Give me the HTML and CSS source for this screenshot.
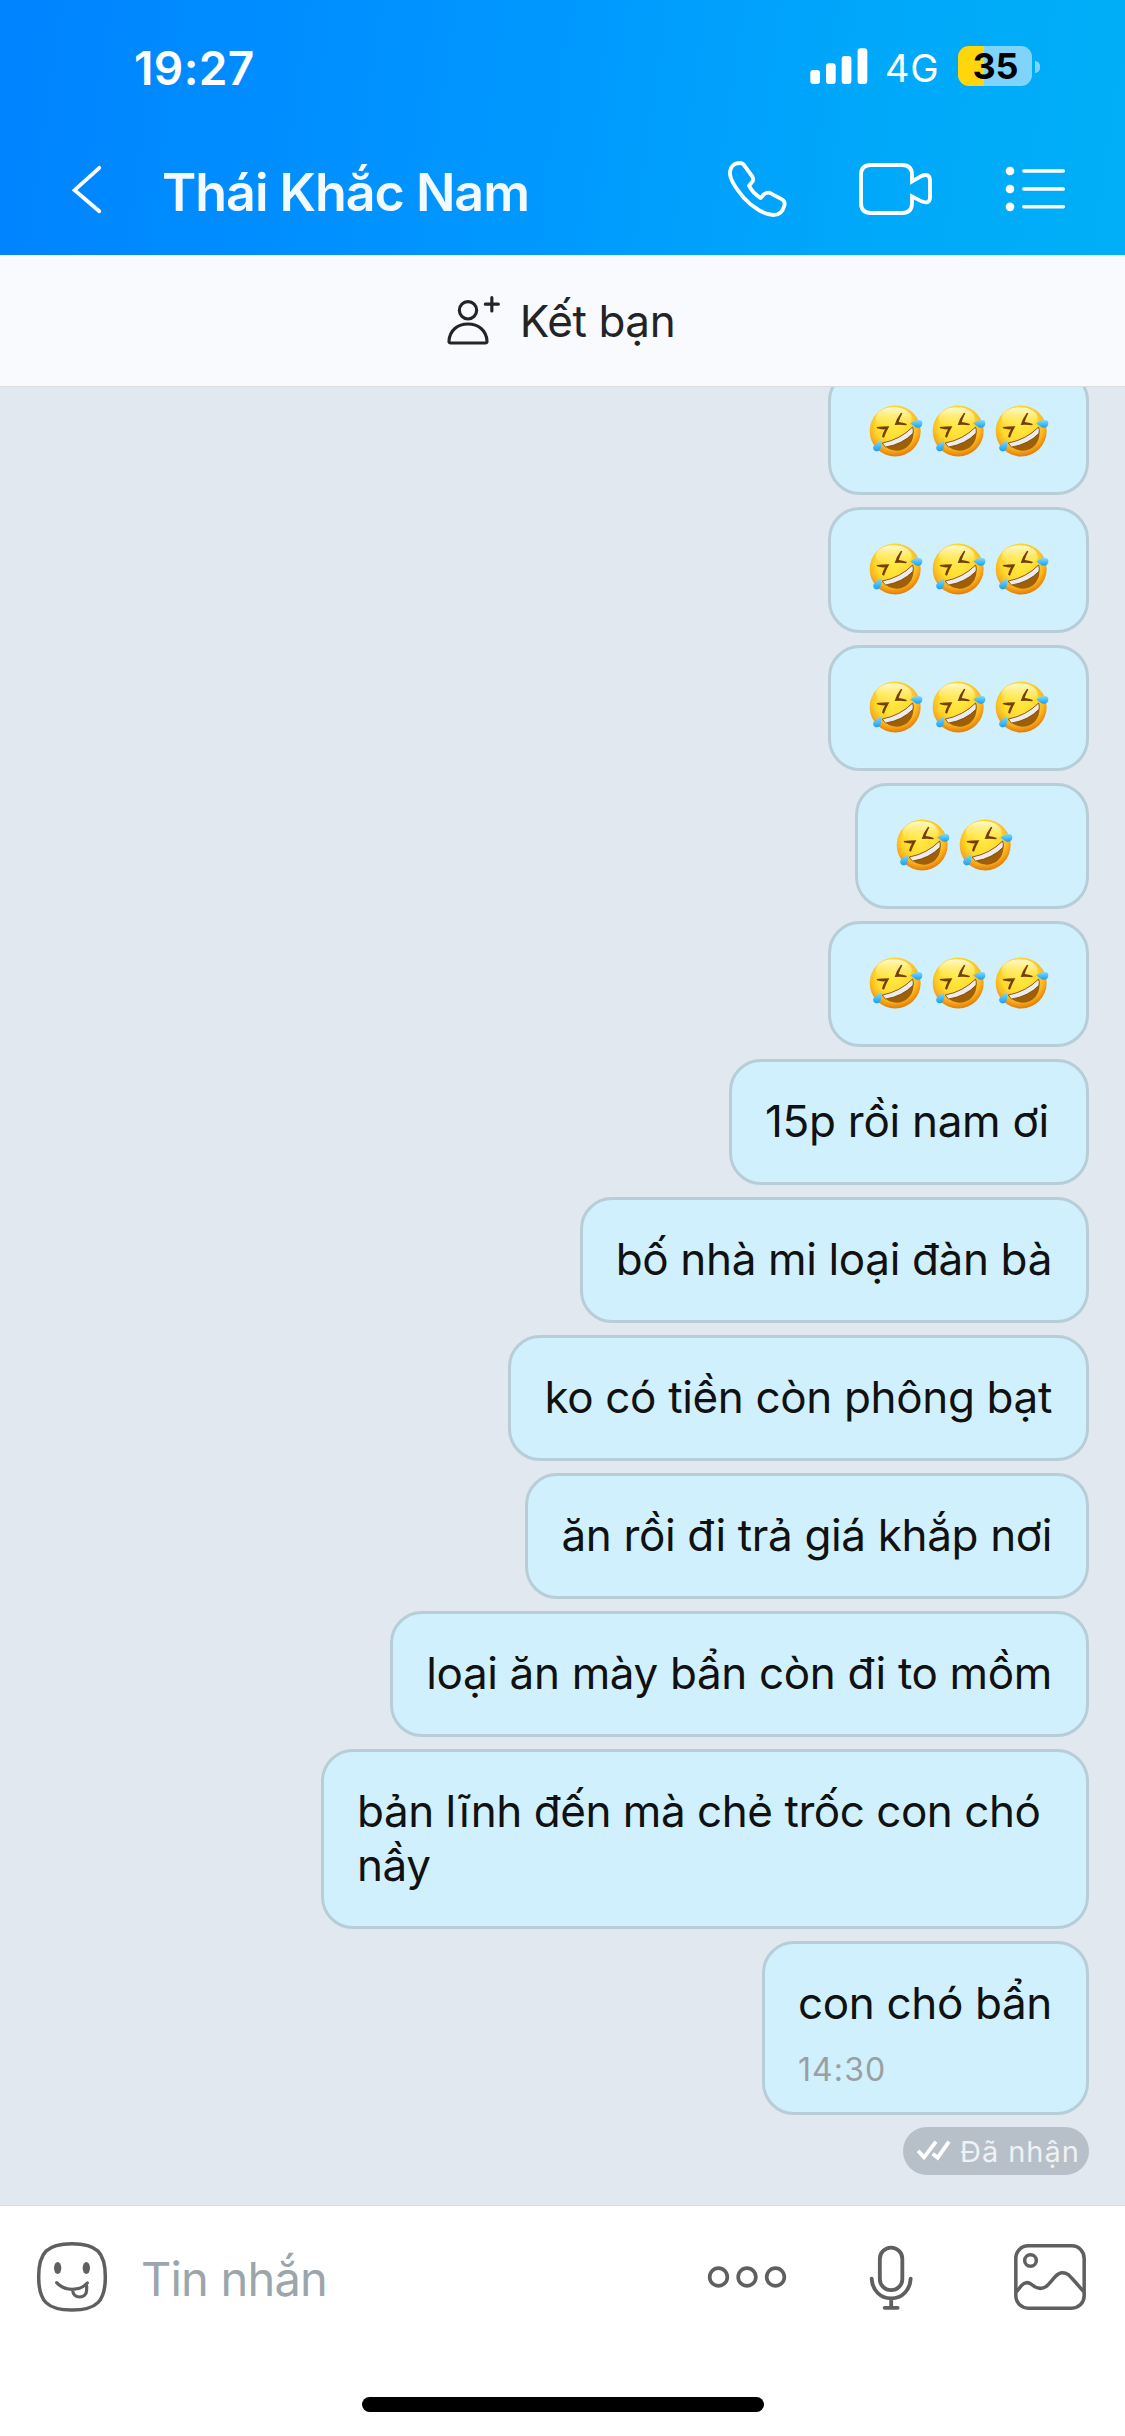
FILE: index.html
```html
<!DOCTYPE html>
<html lang="vi">
<head>
<meta charset="utf-8">
<title>Thái Khắc Nam</title>
<link rel="stylesheet" href="styles.css">
</head>
<body>
<svg class="defs" aria-hidden="true">
  <defs>
    <radialGradient id="face" cx="0.47" cy="0.38" r="0.62">
      <stop offset="0" stop-color="#ffea45"/>
      <stop offset="0.55" stop-color="#ffdb2c"/>
      <stop offset="0.78" stop-color="#fbb31f"/>
      <stop offset="1" stop-color="#e27c05"/>
    </radialGradient>
    <linearGradient id="shine" x1="0" y1="0" x2="0" y2="1">
      <stop offset="0" stop-color="#fffde0" stop-opacity="0.9"/>
      <stop offset="1" stop-color="#fff27a" stop-opacity="0"/>
    </linearGradient>
    <linearGradient id="tear" x1="0" y1="0" x2="0" y2="1">
      <stop offset="0" stop-color="#7cdcff"/>
      <stop offset="1" stop-color="#1b9ff0"/>
    </linearGradient>
    <symbol id="rofl" viewBox="0 0 189 162">
      <circle cx="93.500" cy="81" r="76.500" fill="url(#face)"/>
      <ellipse cx="89" cy="42" rx="54" ry="32" fill="url(#shine)"/>
      <path d="M38 69Q56 67 76 67Q66 84 60 101L54 98Q57 86 63 76Q50 77 39 73Z" fill="#743f05"/>
      <path d="M111 26L115 28Q108 42 104 54Q117 55 129 60L126 64Q111 61 92 63Q97 44 111 26Z" fill="#743f05"/>
      <path d="M55 117Q108 107 146 69C155 100 140 138 98 140Q70 139 55 117Z" fill="#9d6008"/>
      <path d="M55 117Q108 107 146 69Q149 79 147 88Q115 121 65 129Q59 125 55 117Z" fill="#ececef" stroke="#7a4306" stroke-width="2.500"/>
      <path d="M139 59C147 51 155 48 164 48C172 48 176 53 175 60C174 67 168 72 160 71C152 70 147 62 139 59Z" fill="url(#tear)"/>
      <path d="M51 109C53 119 52 128 49 135C46 142 38 144 32 140C26 136 26 129 31 124C37 117 45 116 51 109Z" fill="url(#tear)"/>
    </symbol>
  </defs>
</svg>

<div class="screen">
  <header class="header">
    <div class="status">
      <span class="clock">19:27</span>
      <div class="status-right">
        <svg class="signal" viewBox="810 46 58 40" fill="#fff">
          <rect x="810.3" y="70" width="9.7" height="14" rx="3"/>
          <rect x="826" y="63.3" width="9.7" height="20.7" rx="3"/>
          <rect x="841.7" y="56" width="9.7" height="28" rx="3"/>
          <rect x="857.6" y="48.3" width="9.7" height="35.7" rx="3"/>
        </svg>
        <span class="network">4G</span>
        <span class="battery">35</span>
        <span class="battery-cap"></span>
      </div>
    </div>
    <nav class="nav">
      <svg class="back" viewBox="60 135 50 114" fill="none" stroke="#fff" stroke-width="3.8" stroke-linecap="round">
        <path d="M99.3 167.8L74.6 190.2L99.3 211.3"/>
      </svg>
      <h1 class="title">Thái Khắc Nam</h1>
      <div class="actions">
        <svg class="phone" viewBox="60 405 240 342" fill="none" stroke="#fff" stroke-width="11.5" stroke-linejoin="round">
          <path d="M90 520C90 500 103 489 120 489C127 489 131 493 135 499L157 530C161 537 160 544 154 549L147 557C155 573 167 585 182 594L188 587C194 580 204 576 212 580L246 598C253 602 255 609 253 617C248 636 236 645 220 645C195 644 160 625 132 594C108 566 90 538 90 520Z"/>
        </svg>
        <svg class="video" viewBox="450 405 300 342" fill="none" stroke="#fff" stroke-width="11.5">
          <path d="M636 544V525Q636 495 606 495H513Q483 495 483 525V609Q483 639 513 639H606Q636 639 636 609V589L664 604Q690 614 690 592V542Q690 518 664 528Z"/>
        </svg>
        <svg class="list" viewBox="900 405 210 342" fill="#fff" stroke="#fff">
          <g stroke="none"><circle cx="930" cy="513" r="13"/><circle cx="930" cy="567" r="13"/><circle cx="930" cy="620.5" r="13"/></g>
          <path d="M971.5 513H1090M971.5 567H1090M971.5 620.5H1090" stroke-width="10.5" stroke-linecap="round"/>
        </svg>
      </div>
    </nav>
  </header>

  <div class="friend-bar">
    <svg class="add-friend" viewBox="132 120 180 180" fill="none" stroke="#222426" stroke-width="9.5" stroke-linecap="round" stroke-linejoin="round">
      <circle cx="204" cy="178" r="26"/>
      <path d="M147 269C150 238 172 219 204 219C236 219 258 238 261 269Q262 276 255 276H153Q146 276 147 269Z"/>
      <path d="M256 159.500H295M275.500 140V180"/>
    </svg>
    <span class="friend-label">Kết bạn</span>
  </div>

  <main class="chat">
    <div class="bubble"><div class="emojis"><svg><use href="#rofl"/></svg><svg><use href="#rofl"/></svg><svg><use href="#rofl"/></svg></div></div>
    <div class="bubble"><div class="emojis"><svg><use href="#rofl"/></svg><svg><use href="#rofl"/></svg><svg><use href="#rofl"/></svg></div></div>
    <div class="bubble"><div class="emojis"><svg><use href="#rofl"/></svg><svg><use href="#rofl"/></svg><svg><use href="#rofl"/></svg></div></div>
    <div class="bubble"><div class="emojis"><svg><use href="#rofl"/></svg><svg><use href="#rofl"/></svg></div></div>
    <div class="bubble"><div class="emojis"><svg><use href="#rofl"/></svg><svg><use href="#rofl"/></svg><svg><use href="#rofl"/></svg></div></div>
    <div class="bubble text short">15p rồi nam ơi</div>
    <div class="bubble text">bố nhà mi loại đàn bà</div>
    <div class="bubble text">ko có tiền còn phông bạt</div>
    <div class="bubble text">ăn rồi đi trả giá khắp nơi</div>
    <div class="bubble text">loại ăn mày bẩn còn đi to mồm</div>
    <div class="bubble text long">bản lĩnh đến mà chẻ trốc con chó nầy</div>
    <div class="bubble text last">con chó bẩn<time class="time">14:30</time></div>
    <div class="receipt">
      <svg class="checks" viewBox="705 90 111 66" fill="none" stroke="#fff" stroke-width="11.500">
        <path d="M714 125L732 145L768 98M758 134L773 146L807 98"/>
      </svg>
      <span>Đã nhận</span>
    </div>
  </main>

  <footer class="composer">
    <div class="input-row">
      <svg class="sticker" viewBox="105 150 222 222" fill="none" stroke="#5f5f5f" stroke-width="10.500" stroke-linecap="round">
        <path d="M216 161C290 161 316 187 316 261C316 334 290 360 216 360C142 360 116 334 116 261C116 187 142 161 216 161Z"/>
        <path d="M170 278Q188 298 216 298Q244 298 262 279M218 300C218 328 260 328 260 300V288" stroke-width="9.500"/>
        <g fill="#5f5f5f" stroke="none"><ellipse cx="173" cy="234" rx="11" ry="18"/><ellipse cx="259" cy="234" rx="11" ry="18"/></g>
      </svg>
      <span class="placeholder">Tin nhắn</span>
      <div class="tools">
        <svg class="more" viewBox="75 390 252 222" fill="none" stroke="#5f5f5f" stroke-width="11">
          <circle cx="115.500" cy="501" r="26.500"/><circle cx="201" cy="501" r="26.500"/><circle cx="286.500" cy="501" r="26.500"/>
        </svg>
        <svg class="mic" viewBox="561 390 144 222" fill="none" stroke="#5f5f5f" stroke-width="11.500" stroke-linecap="round">
          <rect x="599.500" y="413" width="67.500" height="127.500" rx="33.700"/>
          <path d="M575 506C577 540 600 565 633.500 565C667 565 690 540 692 506M633.500 565V593M614 593.500H653"/>
        </svg>
        <svg class="gallery" viewBox="999 390 222 222" fill="none" stroke="#5f5f5f" stroke-width="10.500">
          <rect x="1007.500" y="407.500" width="205" height="187" rx="37"/>
          <circle cx="1051.500" cy="451.500" r="17.500"/>
          <path d="M1009 546L1024 527Q1040 510 1057 525Q1079 543 1099 529C1112 518 1122 501 1135 492Q1150 484 1165 494Q1172 500 1211 545"/>
        </svg>
      </div>
    </div>
    <div class="home-indicator"></div>
  </footer>
</div>
</body>
</html>
```
FILE: styles.css
```css
* { box-sizing: border-box; }

body {
  margin: 0;
  font-family: "Inter", "Liberation Sans", sans-serif;
  color: #111;
}

svg { display: block; flex: none; }
.defs { position: absolute; width: 0; height: 0; }

.screen {
  width: 1125px;
  height: 2436px;
  display: flex;
  flex-direction: column;
  overflow: hidden;
}

/* Header */
.header {
  flex: none;
  height: 255px;
  color: #fff;
  background: linear-gradient(98deg, #0084ff 2%, #0098ff 48%, #00a8fa 76%, #00aff7 100%);
}

.status {
  height: 135px;
  display: flex;
  align-items: center;
  justify-content: space-between;
  padding: 0 85px 0 134px;
}

.clock { font-size: 46px; font-weight: 600; letter-spacing: 0.4px; }
.status-right { display: flex; align-items: center; }
.signal { width: 58px; height: 40px; margin-top: -3px; }
.network { width: 73px; margin-left: 17px; font-size: 38px; letter-spacing: 0.8px; line-height: 40px; }

.battery {
  width: 74px;
  height: 40px;
  margin: -3px 3px 0 0;
  padding-left: 1px;
  border-radius: 11px;
  background: linear-gradient(90deg, #ffd60c 26px, #80d3fb 26px);
  color: #000;
  font-size: 36px;
  font-weight: 700;
  line-height: 40px;
  text-align: center;
}

.battery-cap {
  width: 5px;
  height: 12px;
  margin-top: -2px;
  border-radius: 0 5px 5px 0;
  background: #80d3fb;
}

.nav {
  height: 114px;
  display: flex;
  align-items: center;
  padding: 0 55px 0 60px;
}

.back { width: 50px; height: 114px; }
.title {
  margin: 0 0 0 52px;
  color: #f2f9ff;
  font-size: 52px;
  font-weight: 600;
  letter-spacing: -1.05px;
  white-space: nowrap;
}
.actions { display: flex; gap: 50px; margin-left: auto; }
.phone { width: 80px; height: 114px; }
.video { width: 100px; height: 114px; }
.list { width: 70px; height: 114px; }

/* Add friend bar */
.friend-bar {
  flex: none;
  height: 132px;
  display: flex;
  align-items: center;
  justify-content: center;
  gap: 16px;
  padding-right: 6px;
  border-bottom: 1px solid #dcdde0;
  background: #f9fafe;
  color: #222426;
}
.add-friend { width: 60px; height: 60px; }
.friend-label { font-size: 44px; letter-spacing: -0.4px; }

/* Conversation */
.chat {
  flex: 1;
  min-height: 0;
  display: flex;
  flex-direction: column;
  align-items: flex-end;
  justify-content: flex-end;
  gap: 12px;
  padding: 0 36px 30px;
  overflow: hidden;
  background: #e2e8f0;
}

.bubble {
  flex: none;
  min-width: 234px;
  max-width: 768px;
  padding: 32px 33px 34px;
  border: 3px solid #b7cdd7;
  border-radius: 32px;
  background: #d0f0fd;
  font-size: 44px;
  line-height: 54px;
}
.text { padding-right: 34px; letter-spacing: -0.35px; }
.short { min-width: 360px; letter-spacing: -0.28px; }
.long { letter-spacing: -0.46px; }
.last { padding-bottom: 22px; }

.emojis { display: flex; }
.emojis svg { width: 63px; height: 54px; }

.time {
  display: block;
  margin-top: 20px;
  color: #9a9fa2;
  font-size: 32px;
  line-height: 40px;
  letter-spacing: 1.1px;
}

.receipt {
  flex: none;
  width: 186px;
  height: 48px;
  display: flex;
  align-items: center;
  gap: 8px;
  padding-left: 12px;
  border-radius: 24px;
  background: #b7c0c8;
  color: #eff1f4;
  font-size: 29px;
  letter-spacing: 0.95px;
  white-space: nowrap;
}
.checks { width: 37px; height: 22px; margin-top: -3px; }

/* Composer */
.composer {
  flex: none;
  height: 231px;
  border-top: 1px solid #dadde0;
  background: #fff;
}
.input-row {
  height: 145px;
  display: flex;
  align-items: center;
  padding: 0 38px 0 35px;
}
.sticker { width: 74px; height: 74px; margin-top: -4px; }
.placeholder { margin: -1px 0 0 32px; color: #9ba5ac; font-size: 47px; letter-spacing: -0.8px; }
.tools { display: flex; margin: -3px 0 0 auto; }
.more { width: 84px; height: 74px; }
.mic { width: 48px; height: 74px; margin-left: 78px; }
.gallery { width: 74px; height: 74px; margin-left: 98px; }

.home-indicator {
  width: 402px;
  height: 15px;
  margin: 46px auto 0;
  border-radius: 8px;
  background: #000;
}
```
